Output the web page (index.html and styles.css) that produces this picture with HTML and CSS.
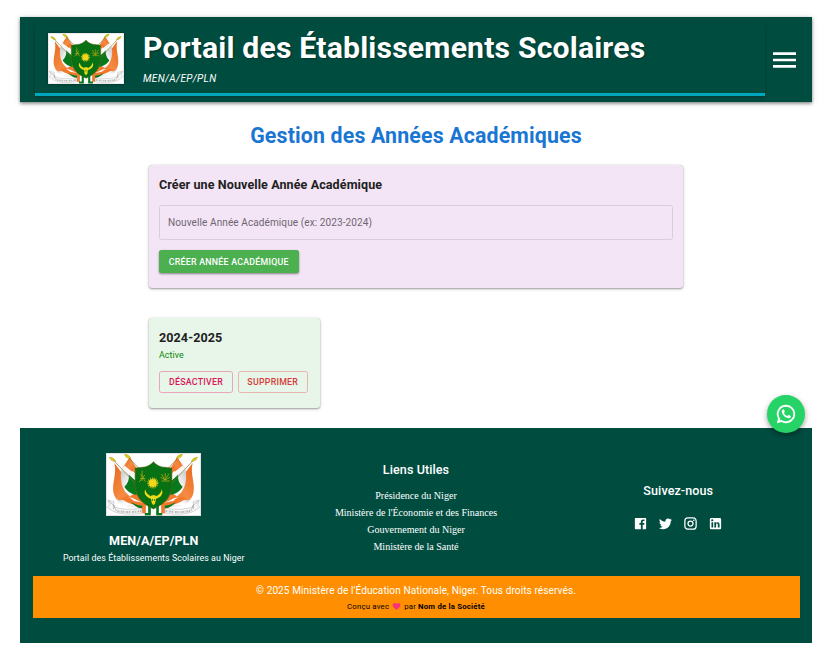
FILE: index.html
```html
<!DOCTYPE html>
<html lang="fr">
<head>
<meta charset="utf-8">
<title>Portail des Établissements Scolaires</title>
<link rel="stylesheet" href="styles.css">
</head>
<body>
<svg class="defs" width="0" height="0" aria-hidden="true">
  <defs>
    <linearGradient id="cloth" x1="0" y1="0" x2="1" y2="1">
      <stop offset="0" stop-color="#c9c9c9"/><stop offset=".5" stop-color="#fff"/><stop offset="1" stop-color="#ddd"/>
    </linearGradient>
    <linearGradient id="orange" x1="0" y1="0" x2="1" y2="1">
      <stop offset="0" stop-color="#e8671c"/><stop offset=".5" stop-color="#f58a42"/><stop offset="1" stop-color="#ee6a1a"/>
    </linearGradient>
    <g id="flags">
      <path fill="url(#orange)" d="M72 13 90 45 82 78 49 45Z"/>
      <path fill="url(#cloth)" d="M57 30 91 65 88 115 38 66Z"/>
      <path fill="url(#orange)" d="M69 15 89 42 78 56 55 38Z"/>
      <path fill="#f7f7f7" d="M55 38 78 58 70 68 47 47Z"/>
      <path fill="url(#orange)" d="M25 30C34 65 14 96 24 125 35 156 70 160 120 158L120 134C76 134 50 106 46 58Z"/>
      <path fill="url(#cloth)" d="M45 54C42 92 50 114 74 132L98 140 92 78 65 61Z"/>
      <path fill="#f27a2c" d="M88 120 122 150V164H96L72 130Z"/>
      <path fill="#08781c" d="M68 65 92 86 92 126C72 122 60 111 55 101 65 92 70 79 68 65Z"/>
      <path fill="url(#cloth)" d="M28 134C50 158 60 117 91 141L112 150V163H80Q39 162 28 134Z"/>
      <path fill="#f4772a" d="M46 137Q64 125 83 144L116 150V157Q77 160 46 137Z"/>
      <path fill="#08781c" d="M75 148Q96 160 118 157V169Q93 168 75 148Z"/>
      <path fill="#f27a2c" d="M108 145H121V181H108Z"/>
      <path fill="#fff" d="M119 154H126V184H119Z"/>
      <path stroke="#77722b" stroke-width="2" fill="none" d="M20 19 98 102M63 9 102 50"/>
      <path fill="#ddc817" stroke="#8e8119" d="M10 13Q23 12 29 25 16 27 10 13ZM55 4Q68 3 74 16 60 18 55 4Z"/>
      <path fill="#f6f6f6" stroke="#aaa" stroke-width="1.4" d="M5 141 24 146 22 160Q48 174 107 166V181Q50 189 20 174L4 163 10 154Z"/>
      <path stroke="#888" fill="none" stroke-width="1.5" d="M7 144 25 158 22 168M22 156 31 174"/>
    </g>
    <symbol id="emblem" viewBox="0 0 284 189" preserveAspectRatio="none">
      <path fill="#fff" d="M0 0H284V189H0Z"/>
      <use href="#flags"/>
      <use href="#flags" transform="matrix(-1 0 0 1 284 0)"/>
      <path fill="none" stroke="#777" stroke-width="6" stroke-dasharray="4 2 1 3 5 2" opacity=".5" d="M34 174Q70 180 105 174M179 174Q220 180 252 174"/>
      <path stroke="#08781c" stroke-width="8" fill="none" d="M130 158V184H116M154 158V184H168"/>
      <path fill="#087114" stroke="#715e12" stroke-width="1.5" d="M142 26Q128 42 106 43L87 45V96C88 132 108 153 142 168 176 153 196 132 197 96V45L178 43Q155 42 142 26Z"/>
      <circle cx="140" cy="90" r="12" fill="#f0d719"/>
      <circle cx="140" cy="90" r="14" fill="none" stroke="#e9d018" stroke-width="5" stroke-dasharray="2.500 3.100"/>
      <path fill="#edda19" d="M117 109Q121 124 134 130L137 127H147L150 130Q163 124 167 109 173 127 157 134L150 137 147 151 142 157 137 151 134 137 127 134Q111 126 117 109Z"/>
      <path stroke="#b9ac16" stroke-width="2.200" fill="none" d="M108 53V84M103 63 118 86M116 66 99 87M102 76H118M177 60V81M166 63 176 81M188 62 177 81M163 73 177 81M191 73 177 81M166 84H191"/>
      <path fill="#156f19" d="M137 138H140V143H137ZM144 138H147V143H144Z"/>
      <path fill="none" stroke="#ccc" stroke-width="2" d="M1 1H283V188H1Z"/>
    </symbol>
  </defs>
</svg>
<div class="page">
  <header class="appbar">
    <div class="brand">
      <svg class="brand-logo"><use href="#emblem"/></svg>
      <div class="brand-text">
        <h1>Portail des Établissements Scolaires</h1>
        <p>MEN/A/EP/PLN</p>
      </div>
    </div>
    <button class="menu" aria-label="Menu"><svg viewBox="0 0 24 16"><path d="M0 0H24V2.67H0ZM0 6.67H24V9.33H0ZM0 13.33H24V16H0Z"/></svg></button>
  </header>
  <main class="content">
    <h2>Gestion des Années Académiques</h2>
    <section class="card create">
      <h3>Créer une Nouvelle Année Académique</h3>
      <div class="field"><span>Nouvelle Année Académique (ex: 2023-2024)</span></div>
      <button class="btn solid"><span>CRÉER ANNÉE ACADÉMIQUE</span></button>
    </section>
    <section class="card year">
      <h3>2024-2025</h3>
      <p>Active</p>
      <div class="actions">
        <button class="btn pink"><span>DÉSACTIVER</span></button>
        <button class="btn red"><span>SUPPRIMER</span></button>
      </div>
    </section>
  </main>
  <footer class="footer">
    <div class="columns">
      <div class="col about">
        <svg class="footer-logo"><use href="#emblem"/></svg>
        <h4>MEN/A/EP/PLN</h4>
        <p>Portail des Établissements Scolaires au Niger</p>
      </div>
      <div class="col links">
        <h4>Liens Utiles</h4>
        <a>Présidence du Niger</a>
        <a>Ministère de l'Économie et des Finances</a>
        <a>Gouvernement du Niger</a>
        <a>Ministère de la Santé</a>
      </div>
      <div class="col social">
        <h4>Suivez-nous</h4>
        <div class="icons">
          <svg viewBox="0 0 24 24"><path d="M21 4v16a1 1 0 0 1-1 1h-4.500v-7h2.400l.4-2.800h-2.800V9.500c0-.8.300-1.400 1.400-1.400h1.500V5.600c-.3 0-1.200-.1-2.200-.1-2.100 0-3.600 1.300-3.600 3.600v2.100h-2.400V14h2.400v7H4a1 1 0 0 1-1-1V4a1 1 0 0 1 1-1h16a1 1 0 0 1 1 1z"/></svg>
          <svg viewBox="0 0 24 24"><path d="M22.460 6c-.77.350-1.600.580-2.460.690.880-.530 1.560-1.370 1.880-2.380-.83.500-1.750.850-2.720 1.050C18.370 4.500 17.260 4 16 4c-2.350 0-4.270 1.920-4.270 4.290 0 .340.040.670.110.980C8.280 9.090 5.110 7.380 3 4.790c-.37.630-.58 1.370-.58 2.150 0 1.490.750 2.810 1.910 3.560-.71 0-1.370-.2-1.950-.5v.030c0 2.080 1.480 3.820 3.440 4.210a4.220 4.220 0 0 1-1.930.070 4.280 4.280 0 0 0 4 2.980 8.521 8.521 0 0 1-5.330 1.840c-.34 0-.68-.02-1.020-.06C3.440 20.290 5.700 21 8.120 21 16 21 20.330 14.460 20.330 8.790c0-.19 0-.37-.01-.56.840-.6 1.560-1.360 2.140-2.230z"/></svg>
          <svg viewBox="0 0 24 24"><path d="M7.800 2h8.400C19.400 2 22 4.600 22 7.800v8.400a5.800 5.800 0 0 1-5.800 5.800H7.800C4.600 22 2 19.400 2 16.200V7.800A5.800 5.800 0 0 1 7.800 2m-.2 2A3.600 3.600 0 0 0 4 7.600v8.800C4 18.390 5.610 20 7.600 20h8.800a3.600 3.600 0 0 0 3.600-3.600V7.600C20 5.610 18.390 4 16.400 4H7.600m9.650 1.500a1.250 1.250 0 1 1 0 2.500 1.250 1.250 0 0 1 0-2.500M12 7a5 5 0 1 1 0 10 5 5 0 0 1 0-10m0 2a3 3 0 1 0 0 6 3 3 0 0 0 0-6z"/></svg>
          <svg viewBox="0 0 24 24"><path d="M19 3a2 2 0 0 1 2 2v14a2 2 0 0 1-2 2H5a2 2 0 0 1-2-2V5a2 2 0 0 1 2-2h14m-.5 15.500v-5.300a3.260 3.260 0 0 0-3.260-3.260c-.85 0-1.840.520-2.320 1.300v-1.110h-2.790v8.370h2.790v-4.930c0-.77.620-1.400 1.390-1.400a1.400 1.400 0 0 1 1.400 1.400v4.930h2.790M6.880 8.560a1.680 1.680 0 1 0 0-3.370 1.690 1.690 0 1 0 0 3.370m1.390 9.940v-8.370H5.500v8.370h2.770z"/></svg>
        </div>
      </div>
    </div>
    <div class="copyright">
      <p class="rights">© 2025 Ministère de l'Éducation Nationale, Niger. Tous droits réservés.</p>
      <p class="credit"><span>Conçu avec</span><svg class="heart" viewBox="0 0 24 24"><path fill="#f7317c" d="M12 21.500 10.500 20C5.400 15.400 1.500 12 1.500 7.800 1.500 4.700 4 2.500 7 2.500c2 0 3.900 1 5 2.700 1.100-1.700 3-2.700 5-2.700 3 0 5.500 2.200 5.500 5.300 0 4.200-3.900 7.600-9 12.200z"/></svg><span>par <b>Nom de la Société</b></span></p>
    </div>
  </footer>
  <div class="whatsapp">
    <svg viewBox="0 0 24 24"><path d="M16.750 13.960c.25.130.410.200.460.300.060.110.040.610-.21 1.180-.2.560-1.240 1.100-1.700 1.120-.46.020-.47.360-2.960-.73-2.490-1.090-3.990-3.750-4.110-3.920-.12-.17-.96-1.380-.92-2.610.050-1.220.690-1.800.950-2.040.240-.26.510-.29.680-.26h.470c.15 0 .36-.06.550.45l.69 1.870c.06.130.1.280.01.440l-.27.410-.39.420c-.12.120-.26.250-.12.500.12.260.62 1.090 1.320 1.780.91.880 1.710 1.170 1.950 1.300.24.140.39.120.54-.04l.81-.94c.19-.25.350-.19.580-.11l1.670.88M12 2a10 10 0 1 1-5.030 18.650L2 22l1.350-4.970A10 10 0 0 1 12 2m0 2a8 8 0 0 0-6.280 12.960L5 19l2.040-.72A8 8 0 1 0 12 4z"/></svg>
  </div>
</div>
</body>
</html>
```

FILE: styles.css
```css
* { box-sizing: border-box; }
body { margin: 0; background: #fff; font-family: Roboto, "Liberation Sans", sans-serif; color: #212121; height: 656px; overflow: hidden; }
h1, h2, h3, h4, p { margin: 0; white-space: nowrap; }
button { font: inherit; border: 0; background: none; padding: 0; }
.defs { position: absolute; }
.page { width: 792px; margin-left: 20px; padding-top: 17px; position: relative; }

.appbar { display: flex; height: 85px; padding: 6px 15px 6px; background: #004d40; color: #fff; box-shadow: 0 1px 3px rgba(0,0,0,.3), 0 2px 3px rgba(0,0,0,.2), 0 1px 8px rgba(0,0,0,.1); }
.brand { display: flex; width: 729.500px; height: 73px; padding: 10px 12.500px 0; border-bottom: 3px solid #00a6bb; box-shadow: 0 2px 5px rgba(0,0,0,.22); }
.brand-logo { width: 76px; height: 51px; flex: none; box-shadow: 0 0 3px rgba(0,0,0,.4); }
.brand-text { margin-left: 19.500px; }
h1 { font-size: 30.150px; line-height: 30px; font-weight: 700; letter-spacing: .185px; text-shadow: 1px 1px 2px rgba(0,0,0,.35); }
.brand-text p { margin-top: 9px; font-size: 10.050px; line-height: 14px; font-style: italic; letter-spacing: .33px; }
.menu { margin-left: 8.500px; width: 23px; }
.menu svg { display: block; width: 23px; height: 16px; fill: #fff; margin-bottom: -1px; }

.content { width: 534px; margin: 0 0 0 129px; }
h2 { margin-top: 21px; font-size: 21.350px; line-height: 26px; font-weight: 700; color: #1976d2; letter-spacing: .145px; text-align: center; }
.card { border-radius: 3px; padding: 0 10px; box-shadow: 0 1px 2px rgba(0,0,0,.32), 0 0 1px rgba(0,0,0,.15), 0 1px 4px rgba(0,0,0,.12); overflow: hidden; }
.card h3 { font-size: 12.560px; line-height: 20px; font-weight: 700; letter-spacing: .09px; }
.create { margin-top: 16px; height: 123px; padding-top: 10px; background: #f3e5f5; }
.field { display: flex; align-items: center; height: 35px; margin-top: 10px; padding-left: 8px; border: 1px solid #daccdc; border-radius: 2.500px; font-size: 10.050px; color: #6f6671; letter-spacing: .08px; }
.btn { display: flex; align-items: center; justify-content: center; height: 23px; border-radius: 2.500px; font-size: 8.800px; font-weight: 500; letter-spacing: .25px; white-space: nowrap; }
.solid { width: 139.500px; margin-top: 10px; background: #4caf50; color: #fff; box-shadow: 0 1px 2px rgba(0,0,0,.35), 0 1px 3px rgba(0,0,0,.12); }
.year { width: 171px; height: 90px; margin-top: 30px; padding-top: 10px; background: #e8f5e9; }
.year p { font-size: 8.800px; line-height: 14px; color: #068806; letter-spacing: .094px; }
.actions { display: flex; gap: 4.500px; margin-top: 9px; }
.actions .btn { height: 22px; border: 1px solid; }
.actions .pink { width: 74px; color: #dc1458; border-color: #eaa4bb; }
.actions .red { width: 70.500px; color: #d63b38; border-color: #e5b5ae; }

.footer { margin-top: 20px; height: 215px; padding: 0 12.500px; background: #004d40; color: #fff; }
.columns { display: grid; grid-template-columns: 242.500px 282px 1fr; height: 148px; }
.col { display: flex; flex-direction: column; align-items: center; }
.footer h4 { font-size: 12.560px; line-height: 20px; font-weight: 500; letter-spacing: .094px; }
.about { padding-top: 25px; }
.footer-logo { width: 95px; height: 63px; }
.footer .about h4 { margin-top: 15px; font-weight: 700; }
.about p { font-size: 8.800px; line-height: 14px; letter-spacing: .09px; }
.links { padding-top: 32px; }
.links h4 { margin-bottom: 8.300px; }
.links a { font: 10.050px/16.850px "Liberation Serif", serif; white-space: nowrap; }
.social { padding-top: 53px; }
.icons { display: flex; gap: 10px; margin-top: 15px; }
.icons svg { width: 15px; height: 15px; fill: #fff; }
.copyright { height: 42px; padding-top: 6px; background: #ff8f00; text-align: center; }
.rights { font-size: 10.050px; line-height: 17px; letter-spacing: .094px; }
.credit { display: flex; align-items: center; justify-content: center; font-size: 7.800px; line-height: 15px; color: #000; letter-spacing: .18px; }
.heart { width: 9px; height: 9px; margin: 0 3px; }

.whatsapp { position: absolute; left: 746.500px; top: 395px; width: 38px; height: 38px; border-radius: 50%; background: #25d366; display: flex; align-items: center; justify-content: center; box-shadow: 0 2px 4px rgba(0,0,0,.25), 0 3px 8px rgba(0,0,0,.15); }
.whatsapp svg { width: 22px; height: 22px; fill: #fff; }
```
